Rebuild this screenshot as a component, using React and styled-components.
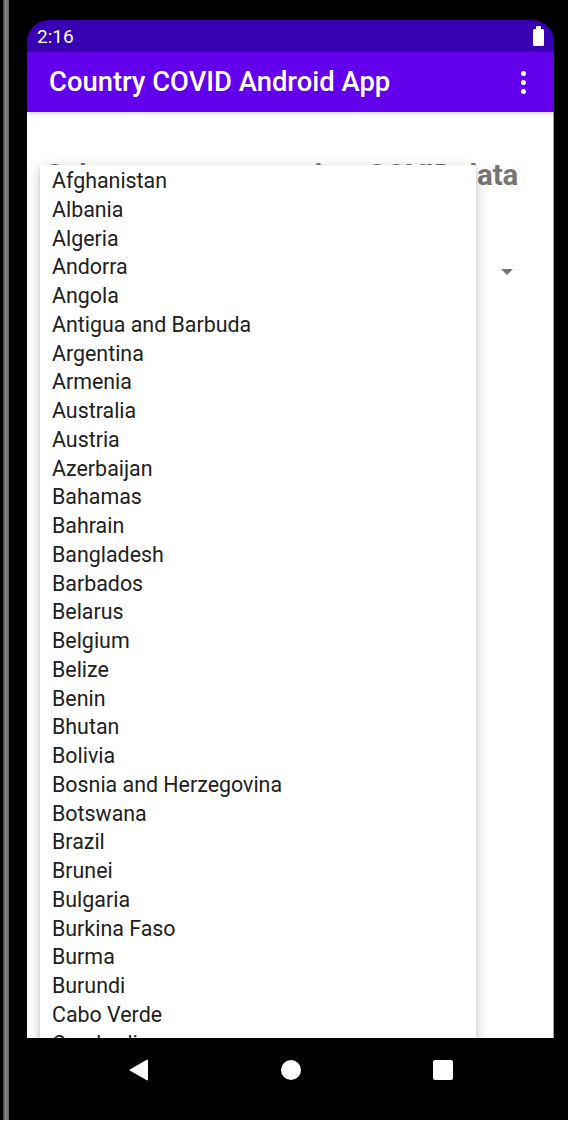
import React from "react";
import styled, { createGlobalStyle } from "styled-components";

const GlobalStyle = createGlobalStyle`
  html, body {
    margin: 0;
    padding: 0;
    background: #ffffff;
  }
  body {
    font-family: Roboto, "Noto Sans", Arial, sans-serif;
  }
`;

const countries = [
  "Afghanistan", "Albania", "Algeria", "Andorra", "Angola",
  "Antigua and Barbuda", "Argentina", "Armenia", "Australia", "Austria",
  "Azerbaijan", "Bahamas", "Bahrain", "Bangladesh", "Barbados",
  "Belarus", "Belgium", "Belize", "Benin", "Bhutan", "Bolivia",
  "Bosnia and Herzegovina", "Botswana", "Brazil", "Brunei", "Bulgaria",
  "Burkina Faso", "Burma", "Burundi", "Cabo Verde", "Cambodia", "Cameroon",
];

const Device = styled.div`
  width: 568px;
  height: 1120px;
  background: #000;
  display: flex;
  align-items: stretch;
`;

const FrameEdge = styled.div`
  width: 6px;
  margin-left: 3px;
  background: linear-gradient(90deg, #3a3a3a 0%, #8a8a8a 45%, #5a5a5a 100%);
`;

const Screen = styled.div`
  width: 527px;
  margin-left: 18px;
  margin-top: 20px;
  display: flex;
  flex-direction: column;
  border-radius: 22px 22px 0 0;
  overflow: hidden;
`;

const StatusBar = styled.div`
  height: 32px;
  background: #3700b3;
  display: flex;
  align-items: center;
  justify-content: space-between;
  padding: 0 10px 0 10px;
  color: #fff;
  font-size: 19px;
`;

const Battery = styled.div`
  position: relative;
  width: 11px;
  height: 17px;
  margin-top: 2px;
  background: #fff;
  border-radius: 1.5px;
  &::before {
    content: "";
    position: absolute;
    top: -3px;
    left: 3px;
    width: 5px;
    height: 3px;
    background: #fff;
    border-radius: 1px 1px 0 0;
  }
`;

const AppBar = styled.div`
  height: 60px;
  background: #6200ee;
  display: flex;
  align-items: center;
  justify-content: space-between;
  padding: 0 28px 0 22px;
  box-shadow: 0 2px 3px rgba(0, 0, 0, 0.15);
  position: relative;
  z-index: 2;
`;

const Title = styled.div`
  color: #fff;
  font-size: 27.4px;
  font-weight: 500;
`;

const Overflow = styled.div`
  display: flex;
  flex-direction: column;
  gap: 4px;
  span {
    width: 5px;
    height: 5px;
    border-radius: 50%;
    background: #fff;
  }
`;

const Content = styled.div`
  position: relative;
  height: 926px;
  background: #fff;
  border-right: 1px solid #a0a0a0;
  overflow: hidden;
  padding: 46px 0 0 18px;
  box-sizing: border-box;
`;

const Heading = styled.div`
  font-size: 29.4px;
  font-weight: 700;
  color: #757575;
  white-space: nowrap;
`;

const SpinnerRow = styled.div`
  height: 48px;
  margin-top: 56px;
  display: flex;
  align-items: center;
  justify-content: flex-end;
  padding-right: 40px;
`;

const Caret = styled.div`
  width: 0;
  height: 0;
  border-left: 6px solid transparent;
  border-right: 6px solid transparent;
  border-top: 6px solid #757575;
`;

const Popup = styled.ul`
  position: absolute;
  top: 53px;
  left: 13px;
  width: 436px;
  margin: 0;
  padding: 2px 0 0 0;
  list-style: none;
  background: #fff;
  box-shadow: 0 4px 14px rgba(0, 0, 0, 0.22), 0 1px 3px rgba(0, 0, 0, 0.12);
  border-radius: 2px;
`;

const Item = styled.li`
  height: 28.76px;
  line-height: 28.76px;
  padding-left: 12px;
  font-size: 21.4px;
  color: #212121;
  white-space: nowrap;
`;

const NavBar = styled.div`
  flex: 1;
  background: #000;
  display: flex;
  align-items: flex-start;
  justify-content: center;
  gap: 128px;
  padding-top: 21px;
`;

const NavSlot = styled.div`
  width: 24px;
  height: 22px;
  display: flex;
  align-items: center;
  justify-content: center;
`;

const Back = styled.div`
  width: 0;
  height: 0;
  border-top: 11px solid transparent;
  border-bottom: 11px solid transparent;
  border-right: 19px solid #fff;
  border-radius: 2px;
`;

const Home = styled.div`
  width: 20px;
  height: 20px;
  border-radius: 50%;
  background: #fff;
`;

const Recents = styled.div`
  width: 20px;
  height: 20px;
  border-radius: 2px;
  background: #fff;
`;

export default function App() {
  return (
    <>
      <GlobalStyle />
      <Device>
        <FrameEdge />
        <Screen>
          <StatusBar>
            <span>2:16</span>
            <Battery />
          </StatusBar>
          <AppBar>
            <Title>Country COVID Android App</Title>
            <Overflow>
              <span />
              <span />
              <span />
            </Overflow>
          </AppBar>
          <Content>
            <Heading>Select a country to view COVID data</Heading>
            <SpinnerRow>
              <Caret />
            </SpinnerRow>
            <Popup>
              {countries.map((c) => (
                <Item key={c}>{c}</Item>
              ))}
            </Popup>
          </Content>
          <NavBar>
            <NavSlot><Back /></NavSlot>
            <NavSlot><Home /></NavSlot>
            <NavSlot><Recents /></NavSlot>
          </NavBar>
        </Screen>
      </Device>
    </>
  );
}
